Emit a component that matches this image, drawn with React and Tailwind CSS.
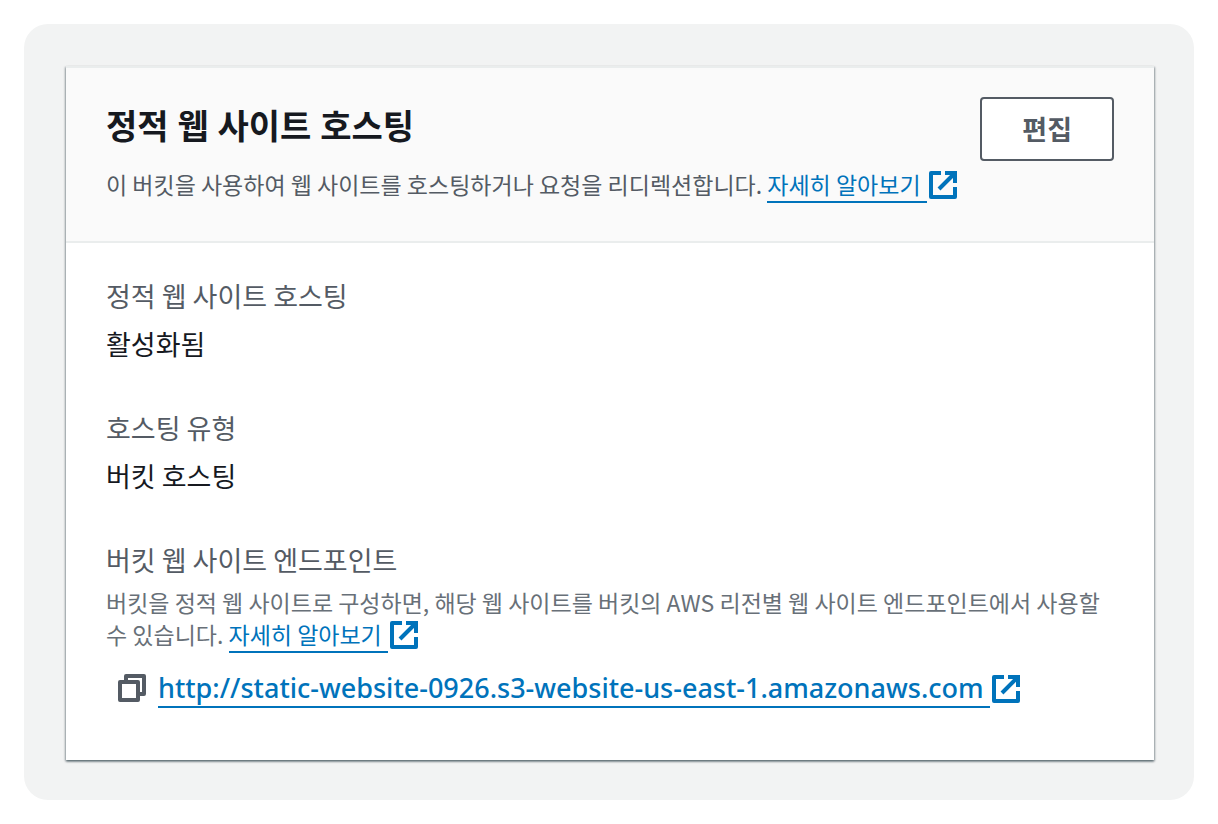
import React from 'react';

function ExternalIcon() {
  return (
    <svg
      viewBox="0 0 28 28"
      className="inline-block h-7 w-7 align-[-5px]"
      fill="none"
      stroke="currentColor"
      strokeWidth="4"
      strokeLinejoin="round"
      aria-hidden="true"
    >
      <path d="M12 2H2v24h24V16" />
      <path d="M16 2h10v10" strokeLinejoin="miter" />
      <path d="M25 3L10 18" />
    </svg>
  );
}

function CopyIcon() {
  return (
    <svg
      viewBox="0 0 28 28"
      className="h-7 w-7"
      fill="none"
      stroke="currentColor"
      strokeWidth="4"
      strokeLinejoin="round"
      aria-hidden="true"
    >
      <path d="M2 8h18v18H2z" />
      <path d="M8 8V2h18v18h-6" />
    </svg>
  );
}

function ExternalLink({ href, children }) {
  return (
    <a href={href} className="whitespace-nowrap text-[#0073bb] hover:text-[#0a4a74]">
      <span className="mr-0.5 border-b-2 border-current pr-1.5">{children}</span>
      <ExternalIcon />
    </a>
  );
}

function Field({ label, children }) {
  return (
    <div>
      <dt className="text-[27px] leading-11 text-[#545b64]">{label}</dt>
      <dd className="mt-1 text-[27px] leading-11 text-[#16191f]">{children}</dd>
    </div>
  );
}

function App() {
  return (
    <div className="min-h-screen bg-white p-6 font-['Noto_Sans_CJK_KR',sans-serif]">
      <main className="rounded-3xl bg-[#f2f3f3] pt-[42px] pr-10 pb-10 pl-[42px]">
        <section className="border-t-2 border-[#eaeded] bg-white shadow-[0_2px_2px_0_rgba(0,28,36,0.3),1px_1px_2px_0_rgba(0,28,36,0.3),-1px_1px_2px_0_rgba(0,28,36,0.3)]">
          {/* Header */}
          <header className="flex items-start justify-between gap-2 border-b-2 border-[#eaeded] bg-[#fafafa] px-10 pt-7 pb-[37px]">
            <div>
              <h2 className="font-['Noto_Sans','Noto_Sans_CJK_KR',sans-serif] text-[34px] leading-[60px] font-bold text-[#16191f]">
                정적 웹 사이트 호스팅
              </h2>
              <p className="mt-2 text-[23px] leading-10 text-[#545b64]">
                이 버킷을 사용하여 웹 사이트를 호스팅하거나 요청을 리디렉션합니다.{' '}
                <ExternalLink href="#hosting-guide">자세히 알아보기</ExternalLink>
              </p>
            </div>
            <button
              type="button"
              className="mt-px shrink-0 rounded-sm border-2 border-[#545b64] bg-white px-10 py-2 text-[27px] leading-11 font-bold text-[#545b64] hover:bg-[#fafafa]"
            >
              편집
            </button>
          </header>

          {/* Details */}
          <dl className="flex flex-col gap-10 px-10 pt-[31px] pb-13">
            <Field label="정적 웹 사이트 호스팅">활성화됨</Field>
            <Field label="호스팅 유형">버킷 호스팅</Field>
            <div>
              <dt className="text-[27px] leading-11 text-[#545b64]">버킷 웹 사이트 엔드포인트</dt>
              <dd className="mt-1">
                <p className="text-[23px] leading-8 text-[#687078]">
                  버킷을 정적 웹 사이트로 구성하면, 해당 웹 사이트를 버킷의 AWS 리전별 웹 사이트 엔드포인트에서 사용할
                  수 있습니다. <ExternalLink href="#endpoint-guide">자세히 알아보기</ExternalLink>
                </p>
                <div className="mt-[18px] flex items-center gap-3 pl-3 font-['Noto_Sans',sans-serif] text-[27px] leading-10 font-medium">
                  <button type="button" aria-label="복사" className="text-[#545b64] hover:text-[#16191f]">
                    <CopyIcon />
                  </button>
                  <ExternalLink href="http://static-website-0926.s3-website-us-east-1.amazonaws.com">
                    http://static-website-0926.s3-website-us-east-1.amazonaws.com
                  </ExternalLink>
                </div>
              </dd>
            </div>
          </dl>
        </section>
      </main>
    </div>
  );
}

export default App;
